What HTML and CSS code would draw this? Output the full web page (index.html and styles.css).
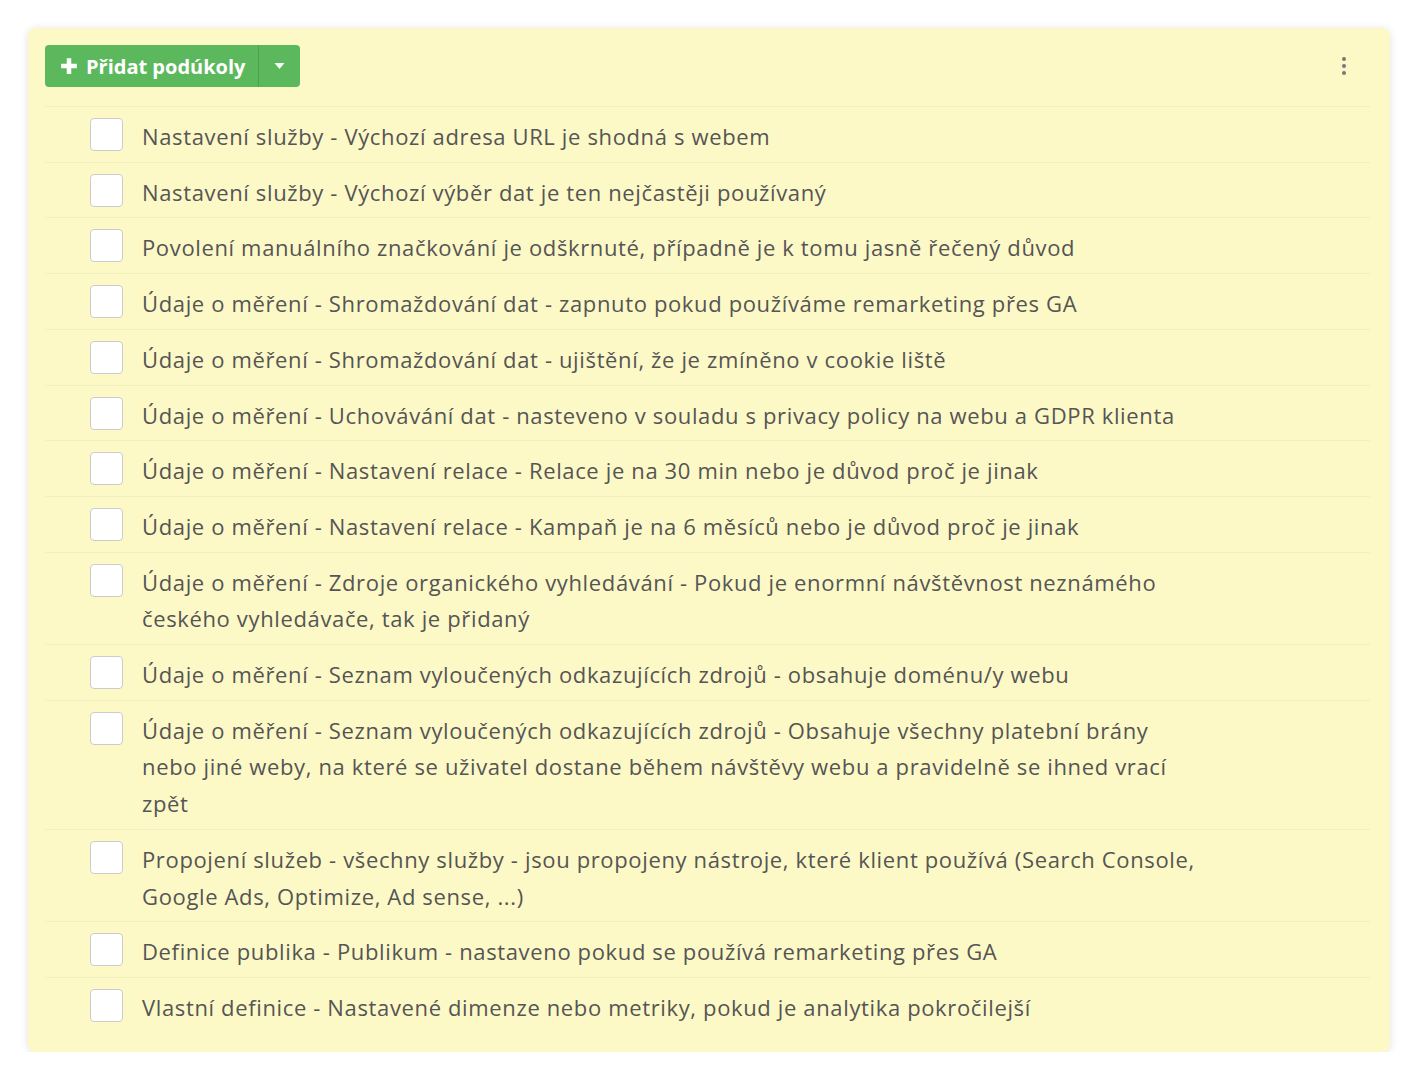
FILE: index.html
```html
<!DOCTYPE html>
<html lang="cs">
<head>
    <meta charset="UTF-8">
    <title>Podúkoly</title>
    <link rel="stylesheet" href="styles.css">
</head>
<body>

    <div class="card">
        <div class="card-header">
            <div class="btn-group">
                <button class="btn btn-main">
                    <svg class="plus" viewBox="0 0 16 16" width="18" height="18"><path d="M6 1h4v5h5v4h-5v5H6v-5H1V6h5z" fill="#fff"/></svg>
                    Přidat podúkoly
                </button>
                <button class="btn btn-caret">
                    <svg viewBox="0 0 10 6" width="11" height="6"><path d="M0 0h10L5 6z" fill="#fff"/></svg>
                </button>
            </div>
            <div class="kebab">
                <span></span><span></span><span></span>
            </div>
        </div>

        <ul class="tasks">
            <li class="task"><span class="check"></span><span class="label">Nastavení služby - Výchozí adresa URL je shodná s webem</span></li>
            <li class="task"><span class="check"></span><span class="label">Nastavení služby - Výchozí výběr dat je ten nejčastěji používaný</span></li>
            <li class="task"><span class="check"></span><span class="label">Povolení manuálního značkování je odškrnuté, případně je k tomu jasně řečený důvod</span></li>
            <li class="task"><span class="check"></span><span class="label">Údaje o měření - Shromaždování dat - zapnuto pokud používáme remarketing přes GA</span></li>
            <li class="task"><span class="check"></span><span class="label">Údaje o měření - Shromaždování dat - ujištění, že je zmíněno v cookie liště</span></li>
            <li class="task"><span class="check"></span><span class="label">Údaje o měření - Uchovávání dat - nasteveno v souladu s privacy policy na webu a GDPR klienta</span></li>
            <li class="task"><span class="check"></span><span class="label">Údaje o měření - Nastavení relace - Relace je na 30 min nebo je důvod proč je jinak</span></li>
            <li class="task"><span class="check"></span><span class="label">Údaje o měření - Nastavení relace - Kampaň je na 6 měsíců nebo je důvod proč je jinak</span></li>
            <li class="task"><span class="check"></span><span class="label">Údaje o měření - Zdroje organického vyhledávání - Pokud je enormní návštěvnost neznámého českého vyhledávače, tak je přidaný</span></li>
            <li class="task"><span class="check"></span><span class="label">Údaje o měření - Seznam vyloučených odkazujících zdrojů - obsahuje doménu/y webu</span></li>
            <li class="task"><span class="check"></span><span class="label">Údaje o měření - Seznam vyloučených odkazujících zdrojů - Obsahuje všechny platební brány nebo jiné weby, na které se uživatel dostane během návštěvy webu a pravidelně se ihned vrací zpět</span></li>
            <li class="task"><span class="check"></span><span class="label">Propojení služeb - všechny služby - jsou propojeny nástroje, které klient používá (Search Console, Google Ads, Optimize, Ad sense, ...)</span></li>
            <li class="task"><span class="check"></span><span class="label">Definice publika - Publikum - nastaveno pokud se používá remarketing přes GA</span></li>
            <li class="task"><span class="check"></span><span class="label">Vlastní definice - Nastavené dimenze nebo metriky, pokud je analytika pokročilejší</span></li>
        </ul>
    </div>

</body>
</html>
```

FILE: styles.css
```css
body {
    margin: 0;
    background-color: #fff;
    font-family: "Open Sans", "Noto Sans", sans-serif;
}

.card {
    margin: 28px 0 0 28px;
    width: 1362px;
    box-sizing: border-box;
    padding: 17px 20px 19px 17px;
    background-color: #fdf9c7;
    border-radius: 8px;
    box-shadow: 0 1px 8px rgba(0, 0, 0, 0.12);
}

.card-header {
    display: flex;
    justify-content: space-between;
    align-items: center;
    padding-bottom: 19px;
    border-bottom: 1px solid #f3efbf;
}

.btn-group {
    display: flex;
    height: 42px;
    border-radius: 4px;
    overflow: hidden;
}

.btn {
    border: 0;
    background-color: #5cb85c;
    color: #fff;
    font-family: inherit;
    font-weight: 700;
    font-size: 20px;
    display: flex;
    align-items: center;
    cursor: pointer;
}

.btn-main {
    padding: 0 13px 0 15px;
    gap: 8px;
}

.btn-caret {
    padding: 0 15px;
    border-left: 1px solid #4ca34c;
}

.kebab {
    display: flex;
    flex-direction: column;
    gap: 3px;
    margin-right: 24px;
}

.kebab span {
    width: 4px;
    height: 4px;
    border-radius: 50%;
    background-color: #777;
}

.tasks {
    list-style: none;
    margin: 0;
    padding: 0;
}

.task {
    display: flex;
    align-items: flex-start;
    padding: 11px 0 7px 45px;
    border-bottom: 1px solid #f3efbf;
}

.task:last-child {
    border-bottom: 0;
}

.check {
    flex: none;
    width: 31px;
    height: 31px;
    background-color: #fff;
    border: 1px solid #ccc;
    border-radius: 4px;
}

.label {
    margin-left: 19px;
    max-width: 1060px;
    font-size: 22px;
    line-height: 36.7px;
    letter-spacing: 0.64px;
    color: #555;
}
```
